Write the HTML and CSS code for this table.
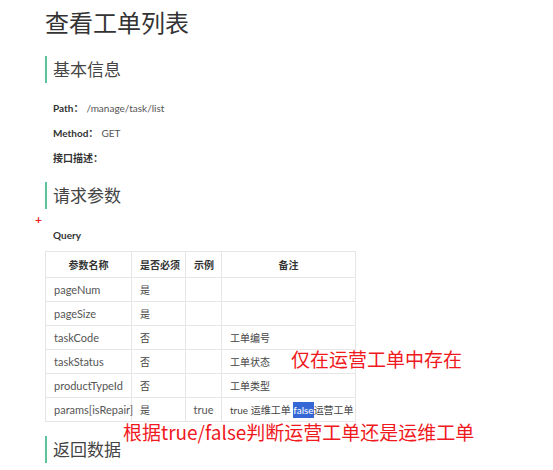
FILE: index.html
```html
<!DOCTYPE html>
<html lang="zh">
<head>
<meta charset="utf-8">
<link rel="stylesheet" href="styles.css">
</head>
<body>
<div class="doc">
  <h1 class="title">查看工单列表</h1>
  <h2 class="sec sec-basic">基本信息</h2>
  <p class="kv"><b>Path：</b><span>/manage/task/list</span></p>
  <p class="kv"><b>Method：</b><span>GET</span></p>
  <p class="kv"><b>接口描述：</b></p>
  <h2 class="sec sec-req">请求参数</h2>
  <div class="plus">+</div>
  <p class="kv query"><b>Query</b></p>
  <table class="params">
    <thead>
      <tr><th class="c1">参数名称</th><th class="c2">是否必须</th><th class="c3">示例</th><th class="c4">备注</th></tr>
    </thead>
    <tbody>
      <tr><td class="en">pageNum</td><td>是</td><td></td><td></td></tr>
      <tr><td class="en">pageSize</td><td>是</td><td></td><td></td></tr>
      <tr><td class="en">taskCode</td><td>否</td><td></td><td>工单编号</td></tr>
      <tr><td class="en">taskStatus</td><td>否</td><td></td><td>工单状态</td></tr>
      <tr><td class="en">productTypeId</td><td>否</td><td></td><td>工单类型</td></tr>
      <tr><td class="en">params[isRepair]</td><td>是</td><td class="en ex">true</td><td>true 运维工单 <span class="sel">false</span>运营工单</td></tr>
    </tbody>
  </table>
  <h2 class="sec sec-ret">返回数据</h2>
  <div class="note note1">仅在运营工单中存在</div>
  <div class="note note2">根据true/false判断运营工单还是运维工单</div>
</div>
</body>
</html>
```
FILE: styles.css
```css
* { box-sizing: border-box; }
html, body { margin: 0; padding: 0; background: #fff; }
body {
  font-family: Lato, "Noto Sans CJK SC", sans-serif;
  color: #333;
  width: 553px;
  height: 470px;
  overflow: hidden;
}
.doc {
  position: relative;
  padding: 6px 0 0 45px;
}
.title {
  margin: 0;
  font-size: 24px;
  font-weight: 400;
  line-height: 34px;
  color: #333;
}
.sec {
  margin: 0;
  font-size: 17px;
  font-weight: 400;
  line-height: 27px;
  height: 27px;
  color: #444;
  border-left: 2px solid #5cc49b;
  padding-left: 6px;
}
.sec-basic { margin-top: 16px; }
.sec-req { margin-top: 17px; }
.sec-ret { margin-top: 14px; }
.kv {
  margin: 0;
  padding-left: 8px;
  font-size: 10px;
  line-height: 14px;
  color: #555;
}
.kv b { color: #333; font-weight: 700; margin-right: 3px; }
.kv + .kv { margin-top: 11px; }
.sec + .kv { margin-top: 18px; }
.plus {
  position: absolute;
  left: 35px;
  top: 214px;
  color: #e8211d;
  font-size: 12px;
  font-weight: 700;
  line-height: 12px;
}
.kv.query { margin-top: 19px; }
.params {
  margin-top: 9px;
  border-collapse: collapse;
  font-size: 10px;
  color: #444;
  width: 310px;
  table-layout: fixed;
}
.params th, .params td {
  border: 1px solid #e6e6e6;
  padding: 0 8px;
  text-align: left;
  white-space: nowrap;
}
.params th {
  height: 26px;
  font-weight: 700;
  color: #333;
  text-align: center;
}
.params td { height: 24px; }
.params .en { font-size: 11px; color: #555; }
.params .c1 { width: 86px; }
.params .c2 { width: 54px; }
.params .c3 { width: 36px; }
.params .c4 { width: 134px; }
.params td.ex { text-align: center; padding: 0; }
.sel {
  background: #3568d4;
  color: #fff;
  padding: 2px 0;
}
.note {
  position: absolute;
  color: #f0191d;
  font-size: 19px;
  line-height: 24px;
  font-family: "Noto Sans CJK SC", sans-serif;
}
.note1 { left: 291px; top: 347px; }
.note2 { left: 123px; top: 420px; }
```
